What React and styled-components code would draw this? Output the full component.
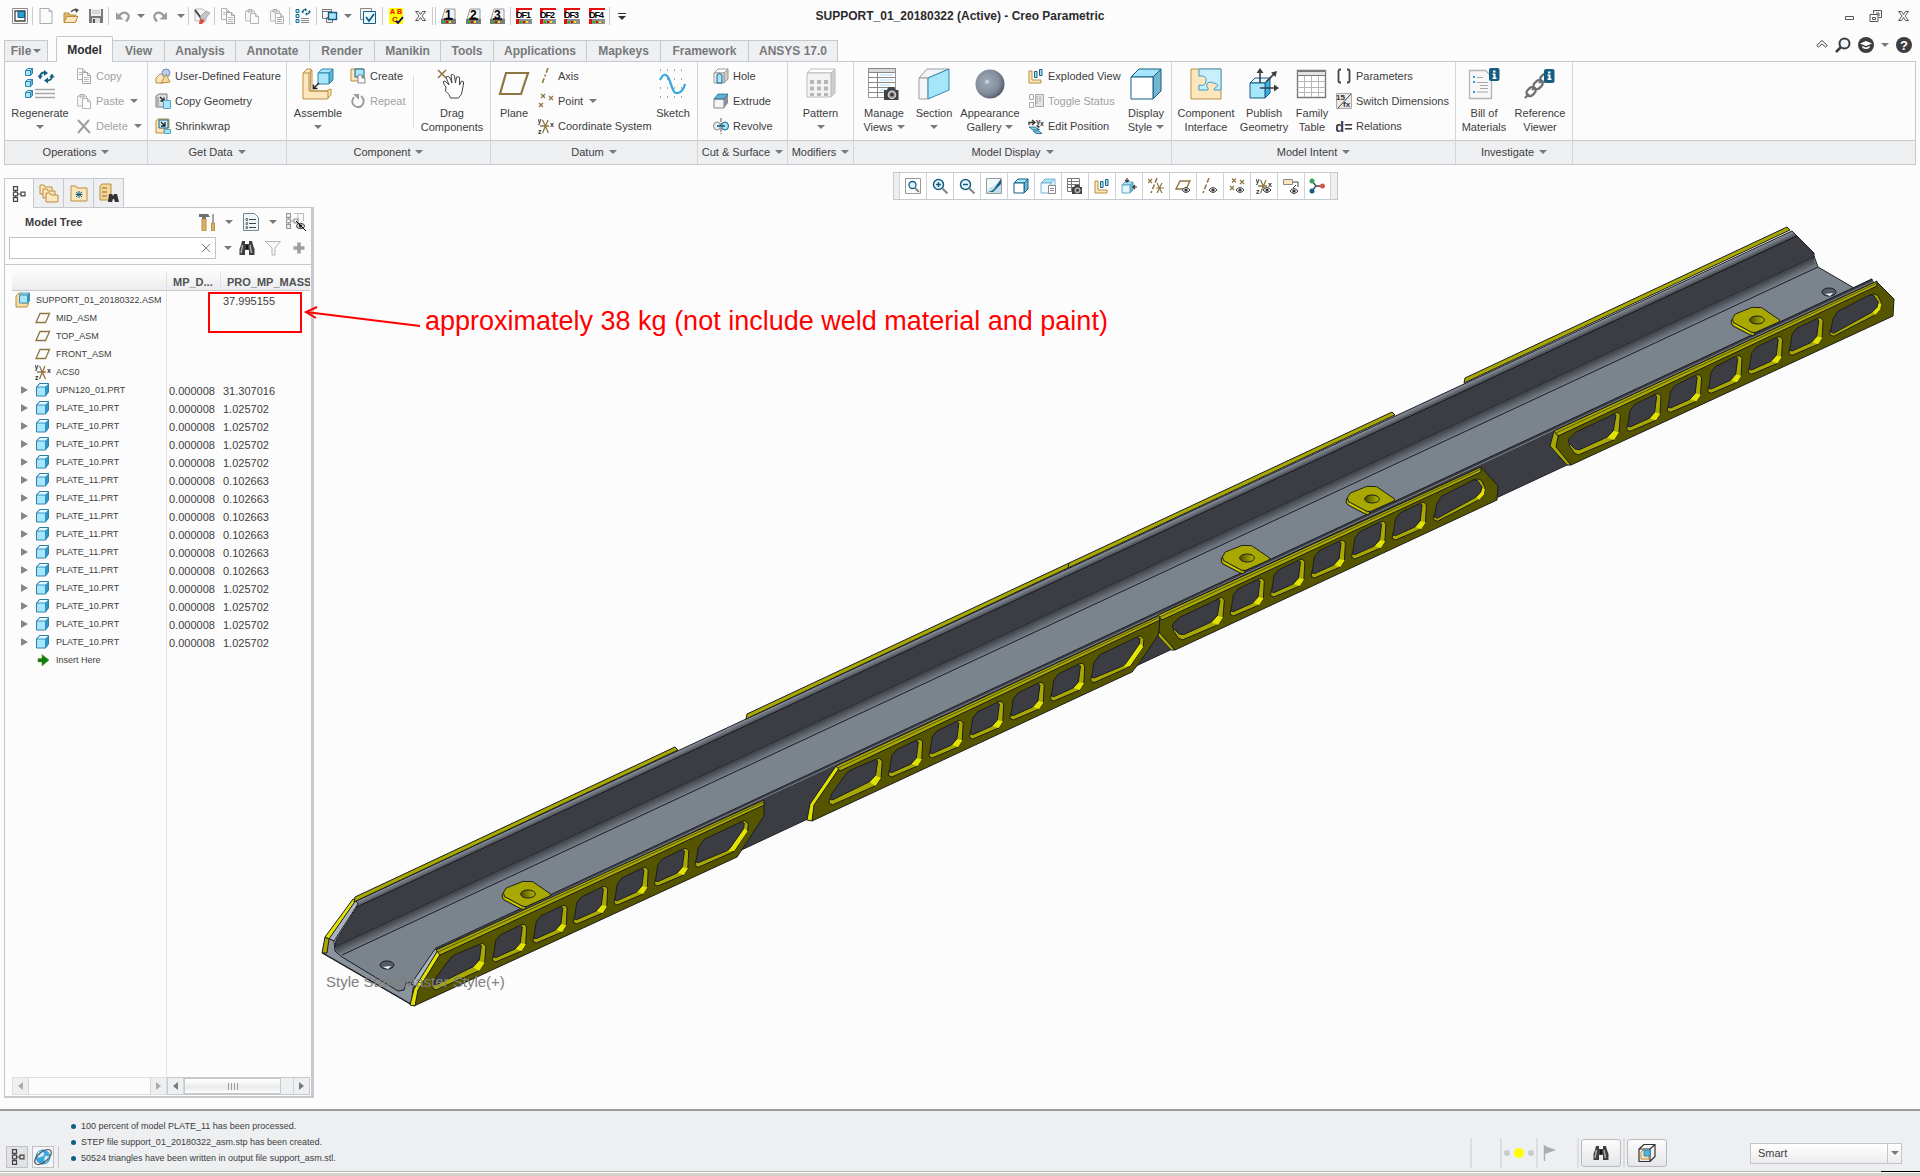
import React from 'react';
import styled, { createGlobalStyle, css } from 'styled-components';

const LINE = '#c5c8cc';
const SOFT = '#eeeff1';
const PAPER = '#fcfcfc';
const INK = '#3c3c3e';
const TEAL = '#135f82';
const CYAN = '#a6e6fb';
const TAN = '#fbe6bd';
const GOLD = '#b98f3f';
const BROWN = '#8f7542';
const MUTE = '#a0a2a4';

const GlobalStyle = createGlobalStyle`
  * { box-sizing: border-box; }
  body { margin: 0; background: ${PAPER}; }
  body, button, input, select {
    font-family: "Liberation Sans", Arial, sans-serif;
    font-size: 11px;
    color: ${INK};
  }
  button { border: 0; padding: 0; background: none; }
  svg { display: block; flex: none; }
`;

/* ---------- icons ---------- */

const Svg = ({ s = 16, children }) => (
  <svg width={s} height={s} viewBox={`0 0 ${s} ${s}`} fill="none" aria-hidden="true">{children}</svg>
);

const Caret = styled.span`
  flex: none;
  width: 0;
  height: 0;
  border: 4px solid transparent;
  border-top: 4px solid #77797b;
  border-bottom: 0;
`;

const Page = ({ x = 1, y = 1, w = 9, h = 11, c = '#a9abad' }) => (
  <path d={`M${x} ${y}h${w - 3}l3 3v${h - 3}h-${w}z M${x + w - 3} ${y}v3h3`} stroke={c} fill="#fafbfc" />
);
const Box3 = ({ x, y, w, d, front = '#fff', top = CYAN, side = '#74b4d0', c = TEAL }) => (
  <g stroke={c} strokeLinejoin="round">
    <path d={`M${x} ${y + d}l${d} -${d}h${w}l-${d} ${d}z`} fill={top} />
    <path d={`M${x + w} ${y + d}l${d} -${d}v${w}l-${d} ${d}z`} fill={side} />
    <path d={`M${x} ${y + d}h${w}v${w}h-${w}z`} fill={front} />
  </g>
);
const Eye = ({ x, y }) => (
  <g>
    <path d={`M${x - 4} ${y}q4 -5 8 0q-4 5 -8 0z`} fill="#eee" stroke="#444" />
    <circle cx={x} cy={y} r="1.6" fill="#333" />
  </g>
);
const Camera = ({ x, y, k = 1 }) => (
  <g transform={`translate(${x} ${y}) scale(${k})`}>
    <path d="M0 2h2l1-2h4l1 2h2v7H0z" fill="#3f4144" />
    <circle cx="5.5" cy="5.3" r="2.6" fill="#999" stroke="#ddd" strokeWidth=".7" />
    <circle cx="5.5" cy="5.3" r="1.2" fill="#333" />
  </g>
);
const Binos = () => (
  <Svg>
    <path d="M3 1h3v3h4V1h3l1 4 1.500 4v6H10v-5H6v5H.5V9L2 5z" fill="#3c3e40" />
    <path d="M3.500 5L2 13M11 5l1.500 8" stroke="#a9abad" strokeWidth="1.500" />
    <path d="M7 5h2v4H7z" fill="#111" />
  </Svg>
);
const Swirl = ({ x, y, k = 1, c = TEAL }) => (
  <g transform={`translate(${x} ${y}) scale(${k})`}>
    <path d="M1 7q0-4 4-4.500M13 6q0 4-4 4.500" stroke={c} strokeWidth="1.8" />
    <path d="M5 0l4 3-4 3z M9 7.500l-4 3 4 3z M-1.500 5.500h5.500l-2.800 4z M10.200 7.500h5.500l-2.800-4z" fill={c} />
  </g>
);
const Cross = ({ x, y, r = 2, c = BROWN }) => (
  <path d={`M${x - r} ${y - r}l${2 * r} ${2 * r}m0 -${2 * r}l-${2 * r} ${2 * r}`} stroke={c} strokeWidth="1.2" />
);
const Tiny = ({ x, y, children, c = '#333', f = 7 }) => (
  <text x={x} y={y} fontSize={f} fontWeight="bold" fill={c} fontFamily="Liberation Sans, sans-serif">{children}</text>
);
const Csys = () => (
  <g>
    <path d="M2 8h9M4.500 2l6 13M10 2L4.500 15" stroke={BROWN} strokeWidth="1.3" />
    <Tiny x={-0.500} y={5} f={7}>y</Tiny><Tiny x={12} y={9} f={7}>x</Tiny><Tiny x={0} y={16} f={7}>z</Tiny>
  </g>
);
const Clip = ({ lines }) => (
  <Svg>
    <path d="M1.500 3h9v10h-9z" stroke="#bbb" fill="#f5f5f5" /><path d="M4 1.500h4v2.500H4z" fill="#ddd" stroke="#aaa" />
    <Page x={6.500} y={5.500} w={8} h={10} c="#b2b4b6" />
    {lines && <path d="M8 9.500h5M8 11.500h5M8 13.500h5" stroke="#aaa" />}
  </Svg>
);
const Exploded = ({ c = GOLD, f = TAN, b = CYAN, s = TEAL }) => (
  <g><path d="M1 3h3v9h9v3H1z" fill={f} stroke={c} /><path d="M6.500 3.500h2.500v6H6.500zM11.500 1.500h2.500v6h-2.500z" fill={b} stroke={s} /></g>
);
const TreeGlyph = ({ c = '#444' }) => (
  <g stroke={c} strokeWidth="1.2"><path d="M3.500 .7h4v3.600h-4zM3.500 6.200h4v3.600h-4zM3.500 11.700h4v3.600h-4zM11 6.200h4v3.600h-4zM5.500 4.300v2M5.500 9.800v2M7.500 8H11" /></g>
);
const Arrow = ({ flip }) => (
  <Svg><path transform={flip ? 'matrix(-1 0 0 1 16 0)' : undefined} d="M3.500 8.500Q8 3 12 5.500T11 13.500" stroke="#9a9c9e" strokeWidth="2.200" /><path transform={flip ? 'matrix(-1 0 0 1 16 0)' : undefined} d="M1 4v7.500h7.500z" fill="#9a9c9e" /></Svg>
);
const MacroIcon = ({ n }) => (
  <Svg>
    <path d="M4 1h10v10H1z" fill="#f2f2f2" stroke="#999" /><path d="M0 11h15v5H0z" fill="#77797b" />
    <path d="M2 13h2v2H2z" fill="#0c0" /><path d="M5 13h2v2H5z" fill="#e00" /><path d="M8 13h2v2H8z" fill="#ee0" />
    <Tiny x={4} y={11} f={12} c="#000">{n}</Tiny>
    <path d="M3 11h9" stroke="#000" strokeWidth="1.500" />
  </Svg>
);
const PdfIcon = ({ n }) => (
  <Svg>
    <path d="M0 0h16v16H0z" fill="#e60f0f" /><path d="M3 2h13v9H0z" fill="#fff" /><path d="M3 11h13v5H3z" fill="#8c8e90" />
    <path d="M4 13h2v2H4z" fill="#0c0" /><path d="M7 13h2v2H7z" fill="#e00" /><path d="M10 13h2v2h-2z" fill="#ee0" />
    <text x="0" y="10" fontSize="9" fontWeight="bold" fill="#000" fontFamily="Liberation Sans, sans-serif" letterSpacing="-1">DF{n}</text>
  </Svg>
);

const I = {
  app: <Svg><path d="M.5 .5h15v15H.5z" stroke="#8a8c8e" fill="#fff" /><path d="M3 3h10v10H3z" fill="#fff" stroke="#444" strokeWidth="1.300" /><path d="M6 3.500h6.500v6H6z" fill="#2d9fd6" stroke={TEAL} /></Svg>,
  fresh: <Svg><Page x={2} y={.5} w={12} h={15} /></Svg>,
  open: <Svg><path d="M1 14V5h5l1 2h6v7z" fill="#e0b970" stroke={GOLD} /><path d="M1 14.500l3-6h11l-3 6z" fill={TAN} stroke={GOLD} /><path d="M8 4q2-3 5-2" stroke="#444" strokeWidth="1.300" /><path d="M12 0l4 2-3 3z" fill="#444" /></Svg>,
  save: <Svg><path d="M1 1h14v14H1z" fill="#77797c" /><path d="M3 1h10v7H3z" fill="#eee" /><path d="M4 3h8M4 5h8" stroke="#bbb" /><path d="M4 10h8v5H4z" fill="#ddd" /><path d="M5 11h2v4H5z" fill="#555" /></Svg>,
  undo: <Arrow />,
  redo: <Arrow flip />,
  erase: <Svg><path d="M1 1h8l3 3v9H1z" fill="#f6f6f6" stroke="#bbb" /><path d="M1 2l6 8" stroke="#444" strokeWidth="2" /><path d="M6 9l6-6 4 2-6 7z" fill="#c4c6c8" stroke="#8d8f92" strokeWidth=".7" /><path d="M6 10l5 3-3 3H5z" fill="#d9534a" /></Svg>,
  copy: <Svg><Page x={1.500} y={.5} w={8} h={11} c="#b2b4b6" /><Page x={6.500} y={4.500} w={8} h={11} c="#a2a4a6" /><path d="M8 9.500h5M8 11.500h5M8 13.500h5M3 4.500h3M3 6.500h3" stroke="#bbb" /></Svg>,
  paste: <Clip />,
  paste2: <Clip lines />,
  del: <Svg><path d="M2 2l12 13M13 2L2 15" stroke="#9c9ea0" strokeWidth="2" /></Svg>,
  regenS: <Svg><path d="M1 1.500h3v3H1zM1 6.500h3v3H1zM1 11.500h3v3H1z" fill={CYAN} stroke={TEAL} strokeWidth=".9" /><Swirl x={7} y={0} k={.58} /><path d="M6 10.500h8M6 12.500h8M6 14.500h8" stroke="#888" /></Svg>,
  windows: <Svg><path d="M.5 1.500h9v9h-9zM4.500 9.500h6v5h-6z" fill="#f5f5f5" stroke="#777" /><path d="M.5 3.500h9" stroke="#777" /><path d="M6.500 4.500h8v7h-8z" fill={CYAN} stroke={TEAL} strokeWidth="1.400" /></Svg>,
  check: <Svg><path d="M.5 .5h11v11H.5z" stroke="#888" fill="#f4f4f4" /><path d="M3.500 3.500h12v12h-12z" fill="#e9f7fd" stroke={TEAL} /><path d="M6 9l3 4 5-7" stroke={TEAL} strokeWidth="1.800" /></Svg>,
  abc: <Svg><path d="M1 0h14v16H1z" fill="#ff0" /><Tiny x={2} y={6} c="#e00">A</Tiny><Tiny x={9} y={6} c="#e00">B</Tiny><Tiny x={4} y={14} f={8} c="#e00">C</Tiny><path d="M8 13l2 2 5-6" stroke="#00006e" strokeWidth="1.800" /></Svg>,
  xx: <Svg><path d="M3.500 3.500h3l2 3 2-3h3l-3.500 4.500 3.500 4.500h-3l-2-3-2 3h-3L7 8z" stroke="#555" fill="#fff" /></Svg>,
  udf: <Svg><path d="M1 10l4-4h6v7l-3 2H1z" fill={TAN} stroke={GOLD} /><circle cx="11" cy="5" r="4" fill="#b9cdf0" stroke="#6d8ac4" /><path d="M6 15l5-9 4 8z" fill="#f5d9a0" stroke={GOLD} /></Svg>,
  copyGeo: <Svg><path d="M1 3l3-2h8v7H9v6H1z" fill="#dcdee0" stroke="#777" /><path d="M4 4v10H1V4z" fill="#aeb1b4" /><path d="M5 4l4 4M9 4.500V8H5.500" stroke="#222" strokeWidth="1.300" /><path d="M8.500 7.500h7v8h-7z" fill={CYAN} stroke="#4fa5c9" /></Svg>,
  shrink: <Svg><path d="M1 3l2-2h11v9H9v5H1z" fill={TAN} stroke={GOLD} /><path d="M4 2h9v8H4z" fill="#cfefff" stroke={TEAL} /><path d="M6 4l4 4M10 4v4H6" stroke="#222" strokeWidth="1.300" /><path d="M9.500 11.500h6v4h-6z" fill={CYAN} stroke="#4fa5c9" /></Svg>,
  create: <Svg><path d="M1 1h12v12H1z" fill={TAN} stroke={GOLD} /><path d="M5 1h9v8H5z" fill={CYAN} stroke={TEAL} /><Page x={8} y={7} w={7} h={8} c="#888" /></Svg>,
  repeat: <Svg><path d="M4 4q-4 6 1 9t8-2q2-5-2-8" stroke="#9c9ea0" strokeWidth="2" /><path d="M3 1h6v6z" fill="#9c9ea0" /></Svg>,
  axis: <Svg><path d="M10 0L4 16" stroke={BROWN} strokeWidth="1.600" strokeDasharray="5 2 2 2" /></Svg>,
  point: <Svg><Cross x={5} y={3} /><Cross x={13} y={5} /><Cross x={3} y={12} /></Svg>,
  csys: <Svg><Csys /></Svg>,
  hole: <Svg><Box3 x={1} y={1} w={10} d={4} front="#eee" top="#fff" side="#ccc" c="#999" /><path d="M4 15V7q2-3 5 0v8z" fill={CYAN} stroke={TEAL} /></Svg>,
  extrude: <Svg><path d="M1 6l4-5h10l-4 5z" fill="#5fb3da" /><path d="M11 6l4-5v9l-4 5z" fill="#8a9097" /><path d="M1 6h10v9H1z" fill="#f4f4f4" stroke="#888" /><path d="M1 6l4-5h10l-4 5z" stroke={TEAL} strokeWidth=".7" /></Svg>,
  revolve: <Svg><ellipse cx="4" cy="8" rx="3.500" ry="4" fill="#e9eef2" stroke="#888" /><ellipse cx="12" cy="8" rx="3.500" ry="4" fill={CYAN} stroke={TEAL} /><path d="M4 8h8" stroke="#2b7fa5" strokeWidth="2" /><path d="M8 0v16" stroke="#555" strokeDasharray="4 1" /></Svg>,
  exploded: <Svg><Exploded /></Svg>,
  toggle: <Svg><path d="M1.500 1.500h4v5h-4zM1.500 9.500h4v5h-4z" stroke="#aaa" /><path d="M7.500 1.500h8v12h-8z" fill="#e4e4e4" stroke="#aaa" /><path d="M9 3v8M12 3v6" stroke="#aaa" /></Svg>,
  editPos: <Svg><path d="M1 7V4.500h5M4 2l3 2.500L4 7" stroke="#333" strokeWidth="1.300" /><Tiny x={8} y={6} f={8}>y</Tiny><Tiny x={12} y={8} f={7}>x</Tiny><Tiny x={8} y={12} f={8}>z</Tiny><path d="M1 9h6l4 3H5zM5 13h6l3 2.500H8z" fill="#7fd0ef" stroke={TEAL} strokeWidth=".8" /></Svg>,
  params: <Svg><path d="M5 1.500H4q-1.500 0-1.500 2v9q0 2 1.500 2h1M11 1.500h1q1.500 0 1.500 2v9q0 2-1.500 2h-1" stroke="#444" strokeWidth="1.800" /></Svg>,
  switchDim: <Svg><path d="M.5 .5h15v15H.5z" fill="#e9e9e9" stroke="#aaa" /><path d="M15 1L2 15" stroke="#444" /><Tiny x={0} y={7} f={8}>15</Tiny><Tiny x={7} y={14} f={8}>fx</Tiny></Svg>,
  relations: <Svg><text x="-1" y="14" fontSize="15" fontWeight="bold" fill="#3d3d3f" fontFamily="Liberation Sans, sans-serif">d=</text></Svg>,
  // 32px ribbon icons
  regen: <Svg s={32}>{[0, 11, 22].map((y) => <Box3 key={y} x={1.500} y={y + .5} w={5} d={2} front={CYAN} c="#2f86ab" />)}<Swirl x={15} y={2} /><path d="M11 21.500h20M11 25.500h20M11 29.500h20" stroke="#a4a6a8" strokeWidth="1.500" /></Svg>,
  assemble: <Svg s={32}><path d="M1 5l4-4 4 0-1 22h16l5-2v6l-4 4H1z" fill={TAN} stroke={GOLD} /><path d="M1 5h6v18h19v8M7 5l3-3v20" stroke={GOLD} /><Box3 x={16} y={1} w={11} d={4} front={CYAN} side="#5bb1d8" c="#2f86ab" /><path d="M17 15l-5 5M11.500 16.500v4h4" stroke="#222" strokeWidth="1.400" /></Svg>,
  drag: <Svg s={32}><path d="M2 2l8 8M10 2L2 10" stroke={BROWN} strokeWidth="1.600" /><path d="M10 19q-4-5-2-6 2 0 5 4L10 9q2-2 4 1l2 5-1-8q2-2 3.500 1l1 7 1-6q3-1 3 1v7l2-4q3 0 2 3l-2 10-3 4h-8q-1-4-5-7z" fill="#fff" stroke="#444" /></Svg>,
  plane: <Svg s={32}><path d="M8 5h22l-7 21H2z" stroke={BROWN} strokeWidth="2.200" /></Svg>,
  sketch: <Svg s={32}><path d="M3 2h26M3 11h26M3 20h26M3 29h26" stroke="#555" strokeDasharray="1 6" /><path d="M3 12q5-10 9-1c4 10 4 15 9 14q5-1 7-9" stroke="#39a7dc" strokeWidth="2.200" /></Svg>,
  pattern: <Svg s={32}><Box3 x={2} y={1} w={24} d={4} front="#f3f3f3" top="#fff" side="#cfcfcf" c="#b9bbbd" /><path d="M5 12h4v4H5zM12 12h4v4h-4zM19 12h4v4h-4zM5 18.500h4v4H5zM12 18.500h4v4h-4zM19 18.500h4v4h-4zM5 25h4v3H5zM12 25h4v3h-4zM19 25h4v3h-4z" fill="#b5b7b9" /></Svg>,
  manage: <Svg s={32}><path d="M.5 .5h27v29H.5z" fill="#fff" stroke="#999" /><path d="M.5 .5h27v4H.5z" fill="#d7d9db" stroke="#888" /><path d="M.5 9.500h27M.5 14.500h27M.5 19.500h27M.5 24.500h27M9.500 4v25" stroke="#888" /><path d="M12 7h13M12 12h13M12 17h10M12 22h6" stroke="#d5eefa" strokeWidth="2" /><Camera x={16} y={19} k={1.450} /></Svg>,
  section: <Svg s={32}><path d="M1 10L9 1h22L10 10z" fill="#f4f5f6" stroke="#9a9c9e" /><path d="M1 10h9v21H1z" fill="#f4f5f6" stroke="#9a9c9e" /><path d="M10 10L31 1v21L10 31z" fill={CYAN} stroke="#2f86ab" /></Svg>,
  sphere: <Svg s={32}><defs><radialGradient id="ball" cx=".4" cy=".42" r=".6"><stop offset="0" stopColor="#e8edf3" /><stop offset=".15" stopColor="#9aa5b3" /><stop offset=".7" stopColor="#828d9b" /><stop offset="1" stopColor="#59606d" /></radialGradient></defs><circle cx="16" cy="16" r="14.500" fill="url(#ball)" /></Svg>,
  display: <Svg s={32}><Box3 x={1} y={1} w={22} d={8} /></Svg>,
  compInt: <Svg s={32}><path d="M1 1h30v30H1z" fill={TAN} stroke={GOLD} /><path d="M9 1h22v21h-7q0-2 3-3.500T24 15t-7 1 1 4v2H9v-5q6 2 7-4T9 8z" fill="#c9effc" stroke="#3f9cc4" /></Svg>,
  publish: <Svg s={32}><Box3 x={2} y={10} w={15} d={5} front={CYAN} side="#3db0e4" top="#e7f6fc" /><path d="M12 15V3M12 20h15M18 14l9-9" stroke="#3d3d3f" strokeWidth="1.600" /><path d="M12 0l3.500 5h-7zM31 20l-5 3.500v-7zM29 3l-1.500 6-4.500-4.500z" fill="#3d3d3f" /></Svg>,
  family: <Svg s={32}><path d="M1.500 2.500h28v27h-28z" fill="#fff" stroke="#77797b" strokeWidth="1.400" /><path d="M1.500 3.500h28v4h-28z" fill="#e1e2e3" stroke="#77797b" /><path d="M1.500 13.500h28M1.500 19.500h28M1.500 24.500h28M8.500 8v21M15.500 8v21M22.500 8v21" stroke="#b5b7b9" /></Svg>,
  bom: <Svg s={32}><path d="M1.500 2.500h16l6 6v22h-22z" fill="#f7f7f8" stroke="#b2b4b6" strokeWidth="1.300" /><path d="M5 8h2v2H5zM5 13h2v2H5zM5 23h2v2H5z" fill="#2d9fd6" /><path d="M9 9.500h6M9 14.500h11M12 17.500h8M12 20.500h8M9 24h11" stroke="#a4a6a8" /><rect x="21" y="0" width="10.500" height="13" rx="2" fill={TEAL} /><path d="M25 2.500h2.500v2H25zM24.500 5.500h3v4h1v1.500h-4V9.500h1V7h-1z" fill="#fff" /></Svg>,
  refView: <Svg s={32}><g stroke="#6d6f72" strokeWidth="2.300"><rect x="-4" y="-3" width="10" height="7" rx="3.500" transform="translate(6 24) rotate(-45)" /><rect x="-4" y="-3" width="10" height="7" rx="3.500" transform="translate(13 17) rotate(-45)" /><rect x="-4" y="-3" width="9" height="6" rx="3" transform="translate(20 10) rotate(-45)" /><path d="M1 30l4-4M8 22l3-3M15 15l3-3" /></g><rect x="20" y="1" width="10.500" height="14" rx="2" fill={TEAL} /><path d="M24 3.500h2.500v2H24zM23.500 6.500h3v4h1V12h-4v-1.500h1V8h-1z" fill="#fff" /></Svg>,
  // graphics toolbar
  zoomFit: <Svg><path d="M.5 .5h15v15H.5z" stroke="#999" /><circle cx="7.500" cy="7" r="3.500" fill="#dff3fc" stroke={TEAL} strokeWidth="1.300" /><path d="M10 10l4 4" stroke="#888" strokeWidth="2" /></Svg>,
  zoomIn: <Svg><circle cx="6.500" cy="6.500" r="5" fill="#e8f6fc" stroke={TEAL} strokeWidth="1.500" /><path d="M4 6.500h5M6.500 4v5" stroke={TEAL} strokeWidth="1.500" /><path d="M10.500 10.500l5 5" stroke="#888" strokeWidth="2.200" /></Svg>,
  zoomOut: <Svg><circle cx="6.500" cy="6.500" r="5" fill="#e8f6fc" stroke={TEAL} strokeWidth="1.500" /><path d="M4 6.500h5" stroke={TEAL} strokeWidth="1.500" /><path d="M10.500 10.500l5 5" stroke="#888" strokeWidth="2.200" /></Svg>,
  repaint: <Svg><path d="M.5 .5h15v15H.5z" fill="#c3dfea" stroke="#999" /><path d="M1 1h14L9 7q-1 2-4 2-3 1-3 5H1z" fill="#eef7fb" /><path d="M15 1v5l-8 8H2q6-1 8-6z" fill={TEAL} /></Svg>,
  dispS: <Svg><Box3 x={1} y={1} w={10} d={4} /></Svg>,
  saved: <Svg><Box3 x={1} y={1} w={10} d={4} front="#f2fafd" side="#e7f6fc" c="#79b3cb" /><path d="M8.500 7.500h7v8h-7z" fill="#fff" stroke="#888" /><path d="M10 10.500h4M10 12.500h4" stroke="#888" /></Svg>,
  cam: <Svg><path d="M.5 .5h12v13H.5z" fill="#fff" stroke="#777" /><path d="M.5 3.500h12M.5 6.500h12M.5 9.500h12M4.500 0v13" stroke="#777" /><Camera x={5} y={7} /></Svg>,
  arrowsBox: <Svg><Box3 x={1} y={4} w={8} d={3} front="#e7f6fc" c="#5fa7c4" /><path d="M6 0v4M4 2l2 2 2-2M16 9h-4M14 7l-2 2 2 2" stroke="#333" strokeWidth="1.200" /></Svg>,
  datum: <Svg><Cross x={2} y={3} /><path d="M9 0L3 15" stroke={BROWN} strokeWidth="1.500" strokeDasharray="5 2" /><path d="M8 10h8M9 5l5 10M14 5L9 15" stroke={BROWN} strokeWidth="1.200" /></Svg>,
  planeEye: <Svg><path d="M5 3h10l-4 8H1z" stroke={BROWN} strokeWidth="1.400" /><Eye x={11} y={12} /></Svg>,
  axisEye: <Svg><path d="M7 0L1 15" stroke={BROWN} strokeWidth="1.500" strokeDasharray="5 2" /><Eye x={11} y={12} /></Svg>,
  pointEye: <Svg><Cross x={5} y={2.500} /><Cross x={13} y={4} /><Cross x={3} y={10} /><Eye x={11} y={12} /></Svg>,
  csysEye: <Svg><Csys /><Eye x={11} y={12} /></Svg>,
  noteEye: <Svg><path d="M.5 1.500h9v5h-9z" fill={TAN} stroke="#888" /><path d="M10 4h5v5M13 7l-3 3" stroke="#444" /><Eye x={11} y={13} /></Svg>,
  spin: <Svg><path d="M3 3l4 5-4 5M7 8h6" stroke="#444" strokeWidth="1.300" /><circle cx="3" cy="3" r="2.500" fill="#3fa35b" /><circle cx="3" cy="13" r="2.500" fill={TEAL} /><circle cx="13.500" cy="8" r="2.500" fill="#d9534a" /></Svg>,
  // navigator
  tree: <Svg><TreeGlyph /></Svg>,
  folders: <Svg s={20}><g fill={TAN} stroke={GOLD}><path d="M1 2h4l1 2h7v7H1z" /><path d="M4 6h4l1 2h7v7H4z" /><path d="M7 10h4l1 2h7v7H7z" /></g></Svg>,
  favs: <Svg s={20}><path d="M2 3h5l1 2h10v13H2z" fill={TAN} stroke={GOLD} /><path d="M10 8v7M7 9l6 5M13 9l-6 5M6.500 11.500h7" stroke={TEAL} /></Svg>,
  cabinet: <Svg s={20}><path d="M1 3l2-2h9v14l-2 2H1z" fill="#f1d79d" stroke={GOLD} /><path d="M3 5h5M3 9h5M3 13h5" stroke={GOLD} strokeWidth="1.500" /><path d="M10 11h3l1 2 1-2h3l2 8h-4l-1-3h-1l-1 3H9z" fill="#333" /></Svg>,
  tools: <Svg s={18}><path d="M1 1h9l2 3H8v2H4V4H1z" fill="#6d7074" /><path d="M4 6h4v12H4z" fill="#d9b26a" stroke={GOLD} /><path d="M15 1v9" stroke="#888" strokeWidth="1.500" /><path d="M13.500 10h3v8h-3z" fill="#d9b26a" stroke={GOLD} /></Svg>,
  list: <Svg s={18}><path d="M1.500 .5h11l4 4v13h-15z" fill="#eef6f9" stroke="#77868f" /><path d="M7 6.500h7M7 10.500h7M7 14.500h7" stroke="#444" /><path d="M4 5.500h1.500v2H4zM4 9.500h1.500v2H4zM4 13.500h1.500v2H4z" stroke="#444" strokeWidth=".7" /></Svg>,
  treeEye: <Svg s={20}><path d="M8 1.500h10M12 1v14M17.500 1v8" stroke="#bbb" /><g transform="translate(-3 1)"><TreeGlyph c="#999" /></g><ellipse cx="14.500" cy="14" rx="4" ry="2.600" fill="#eee" stroke="#333" /><circle cx="14.500" cy="14" r="1.800" fill="#333" /><path d="M10 9l10 10" stroke="#000" /></Svg>,
  binos: <Binos />,
  funnel: <Svg><path d="M.5 1.500h15L10 8v7H7V8z" fill="#f7f7f7" stroke="#b2b4b6" /></Svg>,
  plus: <Svg><path d="M8 2.500v11M2.500 8h11" stroke="#9c9ea0" strokeWidth="3.500" /></Svg>,
  asm: <Svg><path d="M1 4l3-3h3v10h7l-2 4H1z" fill="#f7dda6" stroke={GOLD} /><Box3 x={4.500} y={1} w={8} d={2} front={CYAN} top="#e7f8fe" side="#2f94c8" c="#3f93b8" /></Svg>,
  part: <Svg><path d="M1.500 5l3-3.500h9v8.500l-3 4h-9z" fill="#2f94c8" stroke="#2b7ea6" strokeLinejoin="round" /><path d="M2 5.500h8V13.500H2z" fill="#a6e6fb" /><path d="M2.500 4.500L5 2h8l-2.500 2.500z" fill="#e7f8fe" /></Svg>,
  datumPlane: <Svg><path d="M5 3.500h9.500l-4 9H1z" stroke={BROWN} strokeWidth="1.300" /></Svg>,
  insert: <Svg><path d="M3 6.500h4v-4L14 8l-7 6v-4H3z" fill="#0c7d12" stroke="#6a9c2c" strokeWidth=".6" /></Svg>,
  globe: <Svg s={20}><circle cx="10" cy="10" r="7.500" fill="#3ba6dc" /><path d="M5 5q5-2 6 1t-3 4-4 0zM12 9q4-1 5 2l-4 5q-3-2-1-7z" fill="#c6ecfa" /><ellipse cx="10" cy="10" rx="10" ry="5" stroke="#555" strokeWidth="1.200" transform="rotate(-40 10 10)" /></Svg>,
  cubeSel: <Svg s={18}><path d="M1 5l5-4.500h11v12L12 17.500H1zM1 5h11v12.500M12 5l5-4.500" stroke="#333" strokeWidth="1.200" /><path d="M3 8l2-2h2v5h4v4H3z" fill={TAN} stroke={GOLD} /><path d="M6 6h6v6H6z" fill="#53b4e0" stroke="#2f86ab" /></Svg>,
  flag: <Svg><path d="M2.500 0v16" stroke="#aaacae" strokeWidth="1.500" /><path d="M3 1l11 4-11 4z" fill="#aaacae" /></Svg>,
};

/* ---------- title bar ---------- */

const Shell = styled.div`
  display: flex;
  flex-direction: column;
  height: 100vh;
  overflow: hidden;
  background: ${PAPER};
`;
const TitleBar = styled.header`
  display: grid;
  grid-template-columns: 1fr auto 1fr;
  align-items: center;
  height: 32px;
`;
const Title = styled.h1`
  margin: 0;
  font-size: 12px;
  color: #2b2b2d;
`;
const QuickBar = styled.div`
  display: flex;
  align-items: center;
  padding-left: 8px;
`;
const QuickCell = styled.button`
  display: flex;
  justify-content: center;
  align-items: center;
  flex: none;
  width: ${(p) => p.$w}px;
  height: 24px;
`;
const Rule = styled.span`
  flex: none;
  width: 1px;
  height: ${(p) => p.$h || 18}px;
  margin-right: ${(p) => p.$gap || 0}px;
  background: #c9cbcd;
`;
const Cluster = styled.div`
  display: flex;
  justify-content: flex-end;
  align-items: center;
  gap: ${(p) => p.$gap}px;
  padding: 0 ${(p) => p.$right}px ${(p) => p.$bottom || 0}px 0;
  margin-left: auto;
`;
const IconButton = styled.button`
  display: flex;
  align-items: center;
  justify-content: center;
  flex: none;
`;

const quick = [
  ['app', 24, 'Window menu'], 0, ['fresh', 26, 'New'], ['open', 24, 'Open'], ['save', 25, 'Save'], 0,
  ['undo', 27, 'Undo'], ['v', 10, 'Undo list'], ['redo', 28, 'Redo'], ['v', 14, 'Redo list'], 0,
  ['erase', 25, 'Erase'], 0, ['copy', 25, 'Copy'], ['paste', 24, 'Paste'], ['paste2', 25, 'Paste special'], 0,
  ['regenS', 26, 'Regenerate'], 0, ['windows', 25, 'Windows'], ['v', 12, 'Window list'], ['check', 28, 'Activate'], 0,
  ['abc', 25, 'Spelling'], ['xx', 24, 'Close'], 2, 0,
  ['m1', 26, 'Macro 1'], ['m2', 24, 'Macro 2'], ['m3', 24, 'Macro 3'], 0,
  ['p1', 25, 'PDF 1'], ['p2', 24, 'PDF 2'], ['p3', 24, 'PDF 3'], ['p4', 25, 'PDF 4'], 0, ['more', 24, 'Customize'],
];
const quickGlyph = (k) => {
  if (k === 'v') return <Caret />;
  if (k === 'more') return <Svg><path d="M4 5h8v1H4zM4 8h8l-4 4z" fill="#333" /></Svg>;
  if (/^m\d/.test(k)) return <MacroIcon n={k[1]} />;
  if (/^p\d/.test(k)) return <PdfIcon n={k[1]} />;
  return I[k];
};

/* ---------- ribbon ---------- */

const TabBar = styled.nav`
  display: flex;
  align-items: flex-end;
  height: 29px;
  padding-left: 4px;
`;
const Tab = styled.button`
  display: flex;
  justify-content: center;
  align-items: center;
  gap: 2px;
  width: ${(p) => p.$w}px;
  height: 21px;
  border: 1px solid ${LINE};
  border-width: 1px 1px 0 0;
  background: ${SOFT};
  font-size: 12px;
  font-weight: bold;
  color: #77797b;
  ${(p) => p.$file && css`
    border-left-width: 1px;
    margin-right: 8px;
  `}
  ${(p) => p.$active && css`
    position: relative;
    height: 26px;
    margin-bottom: -1px;
    border-width: 1px 1px 0 1px;
    border-radius: 2px 2px 0 0;
    background: ${PAPER};
    color: #2f2f31;
  `}
`;
const Ribbon = styled.section`
  display: flex;
  margin: 0 4px;
  border: 1px solid ${LINE};
`;
const GroupBox = styled.div`
  display: flex;
  flex-direction: column;
  flex: ${(p) => (p.$w ? 'none' : 1)};
  width: ${(p) => (p.$w ? `${p.$w}px` : 'auto')};
  border-right: ${(p) => (p.$w ? 1 : 0)}px solid #d3d5d8;
`;
const GroupBody = styled.div`
  display: flex;
  height: 78px;
`;
const GroupName = styled.button`
  display: flex;
  justify-content: center;
  align-items: center;
  gap: 5px;
  height: 24px;
  padding-bottom: 2px;
  border-top: 1px solid ${LINE};
  background: ${SOFT};
`;
const BigButton = styled.button`
  display: flex;
  flex-direction: column;
  align-items: center;
  flex: none;
  width: ${(p) => p.$w}px;
  padding-top: 6px;
  white-space: nowrap;
`;
const BigLabel = styled.span`
  display: flex;
  flex-direction: column;
  align-items: center;
  margin-top: 6px;
  line-height: 14px;
`;
const LabelLine = styled.span`
  display: flex;
  align-items: center;
  justify-content: center;
  gap: 4px;
  height: 14px;
`;
const Stack = styled.div`
  display: flex;
  flex-direction: column;
  align-items: flex-start;
  flex: ${(p) => (p.$w ? 'none' : 1)};
  width: ${(p) => (p.$w ? `${p.$w}px` : 'auto')};
  padding: 1px 0 0 ${(p) => p.$pad}px;
`;
const SmallButton = styled.button`
  display: flex;
  align-items: center;
  gap: 4px;
  height: 25px;
  white-space: nowrap;
  color: ${(p) => (p.disabled ? MUTE : INK)};
  ${Caret} { margin-left: 2px; }
`;
const Divider = styled.span`
  width: 1px;
  margin: 13px 0;
  background: #dcdee0;
`;

const big = (icon, w, a, b, caret) => ({ t: 'big', icon, w, a, b, caret });
const stack = (pad, w, ...items) => ({ t: 'stack', pad, w, items });

const groups = [
  { name: 'Operations', w: 143, parts: [big('regen', 70, 'Regenerate', '', true), stack(1, 0, ['copy', 'Copy', 1], ['paste', 'Paste', 1, 1], ['del', 'Delete', 1, 1])] },
  { name: 'Get Data', w: 139, parts: [stack(7, 0, ['udf', 'User-Defined Feature'], ['copyGeo', 'Copy Geometry'], ['shrink', 'Shrinkwrap'])] },
  { name: 'Component', w: 204, parts: [big('assemble', 62, 'Assemble', '', true), stack(1, 64, ['create', 'Create'], ['repeat', 'Repeat', 1]), { t: 'rule' }, big('drag', 76, 'Drag', 'Components')] },
  { name: 'Datum', w: 207, parts: [big('plane', 46, 'Plane'), stack(1, 112, ['axis', 'Axis'], ['point', 'Point', 0, 1], ['csys', 'Coordinate System']), big('sketch', 48, 'Sketch')] },
  { name: 'Cut & Surface', w: 90, parts: [stack(15, 0, ['hole', 'Hole'], ['extrude', 'Extrude'], ['revolve', 'Revolve'])] },
  { name: 'Modifiers', w: 66, parts: [big('pattern', 65, 'Pattern', '', true)] },
  { name: 'Model Display', w: 318, parts: [big('manage', 60, 'Manage', 'Views', true), big('section', 40, 'Section', '', true), big('sphere', 72, 'Appearance', 'Gallery', true), stack(2, 95, ['exploded', 'Exploded View'], ['toggle', 'Toggle Status', 1], ['editPos', 'Edit Position']), big('display', 50, 'Display', 'Style', true)] },
  { name: 'Model Intent', w: 284, parts: [big('compInt', 68, 'Component', 'Interface'), big('publish', 48, 'Publish', 'Geometry'), big('family', 48, 'Family', 'Table'), stack(0, 0, ['params', 'Parameters'], ['switchDim', 'Switch Dimensions'], ['relations', 'Relations'])] },
  { name: 'Investigate', w: 117, parts: [big('bom', 56, 'Bill of', 'Materials'), big('refView', 56, 'Reference', 'Viewer')] },
];

const tabs = [['Model', 57], ['View', 52], ['Analysis', 71], ['Annotate', 74], ['Render', 65], ['Manikin', 66], ['Tools', 53], ['Applications', 93], ['Mapkeys', 74], ['Framework', 88], ['ANSYS 17.0', 89]];

function RibbonPart({ part }) {
  if (part.t === 'rule') return <Divider />;
  if (part.t === 'big') {
    return (
      <BigButton $w={part.w}>
        {I[part.icon]}
        <BigLabel>
          <LabelLine>{part.a}</LabelLine>
          {(part.b || part.caret) && <LabelLine>{part.b}{part.caret && <Caret />}</LabelLine>}
        </BigLabel>
      </BigButton>
    );
  }
  return (
    <Stack $pad={part.pad} $w={part.w}>
      {part.items.map(([icon, label, off, caret]) => (
        <SmallButton key={label} disabled={!!off}>{I[icon]}{label}{caret ? <Caret /> : null}</SmallButton>
      ))}
    </Stack>
  );
}

/* ---------- navigator ---------- */

const Main = styled.main`
  position: relative;
  display: flex;
  flex: 1;
  min-height: 0;
`;
const Navigator = styled.aside`
  display: flex;
  flex-direction: column;
  flex: none;
  width: 310px;
  margin: 13px 0 11px 4px;
`;
const NavTabs = styled.div`
  display: flex;
`;
const NavTab = styled.button`
  display: flex;
  justify-content: center;
  align-items: center;
  width: 30px;
  height: 29px;
  border: 1px solid ${LINE};
  border-width: 1px 1px 0 0;
  background: ${(p) => (p.$active ? PAPER : SOFT)};
  ${(p) => p.$active && css`
    position: relative;
    height: 30px;
    margin-bottom: -1px;
    border-left-width: 1px;
    padding-right: 2px;
  `}
`;
const NavBody = styled.div`
  display: flex;
  flex-direction: column;
  flex: 1;
  min-height: 0;
  border: 1px solid ${LINE};
  border-right-width: 3px;
  border-bottom-width: 2px;
`;
const NavHead = styled.div`
  display: flex;
  align-items: center;
  height: 28px;
  padding: 0 5px 0 20px;
`;
const NavTitle = styled.h2`
  flex: 1;
  margin: 0;
  font-size: 11px;
`;
const Tools = styled.div`
  display: flex;
  align-items: center;
  gap: ${(p) => p.$gap}px;
`;
const SearchRow = styled.div`
  display: flex;
  align-items: center;
  justify-content: space-between;
  height: 29px;
  padding: 0 4px 5px 4px;
  border-bottom: 1px solid ${LINE};
`;
const SearchField = styled.div`
  display: flex;
  align-items: center;
  width: 207px;
  height: 22px;
  padding-right: 4px;
  border: 1px solid #c0c3c6;
  background: #fff;
`;
const SearchInput = styled.input`
  flex: 1;
  min-width: 0;
  border: 0;
  outline: 0;
  background: none;
`;
const TreeArea = styled.div`
  display: flex;
  flex-direction: column;
  flex: 1;
  min-height: 0;
  padding: 6px 1px 0 7px;
`;
const TreeTable = styled.table`
  width: 100%;
  table-layout: fixed;
  border-collapse: separate;
  border-spacing: 0;
`;
const Th = styled.th`
  width: ${(p) => p.$w}px;
  height: 20px;
  padding: 2px 0 0 6px;
  border-bottom: 1px solid ${LINE};
  border-right: ${(p) => (p.$last ? 0 : 1)}px solid #dfe1e3;
  background: linear-gradient(#fbfbfb, #ececee);
  text-align: left;
  white-space: nowrap;
  overflow: hidden;
  color: #4f5153;
`;
const NameCell = styled.td`
  height: 18px;
  padding: 0;
  border-right: 1px solid #dfe1e3;
`;
const NodeLine = styled.span`
  display: flex;
  align-items: center;
  height: 18px;
  padding-left: ${(p) => p.$indent}px;
  font-size: 9px;
  white-space: nowrap;
`;
const Expander = styled.button`
  width: 0;
  height: 0;
  margin-right: 7px;
  border: 4px solid transparent;
  border-left: 7px solid #858789;
  border-right: 0;
`;
const NodeText = styled.span`
  margin-left: 5px;
`;
const ValueCell = styled.td`
  padding: 2px 0 0 2px;
  line-height: 16px;
`;
const ColumnRule = styled.div`
  flex: 1;
  width: 155px;
  border-right: 1px solid #dfe1e3;
`;
const ScrollRow = styled.div`
  display: flex;
  height: 18px;
  margin-bottom: 1px;
`;
const ScrollBar = styled.div`
  display: flex;
  flex: ${(p) => (p.$w ? 'none' : 1)};
  width: ${(p) => (p.$w ? `${p.$w}px` : 'auto')};
  border: 1px solid ${(p) => (p.$dim ? '#dddfe1' : LINE)};
  background: ${(p) => (p.$dim ? PAPER : SOFT)};
`;
const ScrollStep = styled.button`
  display: flex;
  align-items: center;
  justify-content: center;
  width: 16px;
  border: 1px solid #d3d5d7;
  border-width: ${(p) => (p.$end ? '0 0 0 1px' : '0 1px 0 0')};
  margin-left: ${(p) => (p.$end ? 'auto' : 0)};
  background: ${SOFT};
`;
const Thumb = styled.div`
  display: flex;
  align-items: center;
  justify-content: center;
  gap: 2px;
  width: 97px;
  border: 1px solid ${LINE};
  background: linear-gradient(#fff, #e9eaeb 60%, #fff);
`;
const Grip = styled.span`
  width: 1px;
  height: 7px;
  background: #999b9d;
`;

const rows = [
  { k: 'asm', name: 'SUPPORT_01_20180322.ASM', v: '37.995155' },
  { k: 'datumPlane', name: 'MID_ASM' },
  { k: 'datumPlane', name: 'TOP_ASM' },
  { k: 'datumPlane', name: 'FRONT_ASM' },
  { k: 'csys', name: 'ACS0' },
  { k: 'part', name: 'UPN120_01.PRT', d: '0.000008', v: '31.307016' },
  ...Array(4).fill({ k: 'part', name: 'PLATE_10.PRT', d: '0.000008', v: '1.025702' }),
  ...Array(6).fill({ k: 'part', name: 'PLATE_11.PRT', d: '0.000008', v: '0.102663' }),
  ...Array(4).fill({ k: 'part', name: 'PLATE_10.PRT', d: '0.000008', v: '1.025702' }),
  { k: 'insert', name: 'Insert Here' },
];

const Tri = ({ right, c = '#77797b' }) => (
  <svg width="5" height="8" viewBox="0 0 5 8"><path d={right ? 'M0 0l5 4-5 4z' : 'M5 0L0 4l5 4z'} fill={c} /></svg>
);

function ModelTree() {
  return (
    <Navigator>
      <NavTabs role="tablist">
        <NavTab $active aria-label="Model tree">{I.tree}</NavTab>
        <NavTab aria-label="Folder browser">{I.folders}</NavTab>
        <NavTab aria-label="Favorites">{I.favs}</NavTab>
        <NavTab aria-label="Search results">{I.cabinet}</NavTab>
      </NavTabs>
      <NavBody>
        <NavHead>
          <NavTitle>Model Tree</NavTitle>
          <Tools $gap={9}>
            <IconButton aria-label="Settings">{I.tools}</IconButton><Caret />
            <IconButton aria-label="Show">{I.list}</IconButton><Caret />
            <IconButton aria-label="Tree visibility">{I.treeEye}</IconButton>
          </Tools>
        </NavHead>
        <SearchRow>
          <SearchField>
            <SearchInput aria-label="Search the tree" />
            <IconButton aria-label="Clear search"><Svg s={10}><path d="M1 1l8 8M9 1L1 9" stroke="#77797b" /></Svg></IconButton>
          </SearchField>
          <Caret />
          <Tools $gap={10}>
            <IconButton aria-label="Find">{I.binos}</IconButton>
            <IconButton aria-label="Filter">{I.funnel}</IconButton>
            <IconButton aria-label="Add column">{I.plus}</IconButton>
          </Tools>
        </SearchRow>
        <TreeArea>
          <TreeTable>
            <thead>
              <tr><Th $w={155} /><Th $w={54}>MP_D...</Th><Th $last>PRO_MP_MASS</Th></tr>
            </thead>
            <tbody>
              {rows.map((r, i) => (
                <tr key={i}>
                  <NameCell>
                    <NodeLine $indent={r.k === 'asm' ? 3 : r.k === 'part' ? 9 : 23}>
                      {r.k === 'part' && <Expander aria-label={`Expand ${r.name}`} />}
                      {I[r.k]}
                      <NodeText>{r.name}</NodeText>
                    </NodeLine>
                  </NameCell>
                  <ValueCell>{r.d}</ValueCell>
                  <ValueCell>{r.v}</ValueCell>
                </tr>
              ))}
            </tbody>
          </TreeTable>
          <ColumnRule />
          <ScrollRow>
            <ScrollBar $w={155} $dim>
              <ScrollStep aria-label="Scroll names left"><Tri c="#aaacae" /></ScrollStep>
              <ScrollStep $end aria-label="Scroll names right"><Tri right c="#aaacae" /></ScrollStep>
            </ScrollBar>
            <ScrollBar>
              <ScrollStep aria-label="Scroll columns left"><Tri /></ScrollStep>
              <Thumb><Grip /><Grip /><Grip /><Grip /></Thumb>
              <ScrollStep $end aria-label="Scroll columns right"><Tri right /></ScrollStep>
            </ScrollBar>
          </ScrollRow>
        </TreeArea>
      </NavBody>
    </Navigator>
  );
}

/* ---------- graphics area ---------- */

const Viewport = styled.section`
  position: relative;
  flex: 1;
  min-width: 0;
  padding: 7px 4px 0 0;
`;
const ModelCanvas = styled.svg`
  position: absolute;
  inset: 0;
  width: 100%;
  height: 100%;
`;
const ViewTools = styled.div`
  position: relative;
  display: flex;
  width: max-content;
  height: 28px;
  margin: 0 auto;
  padding: 0 6px 0 5px;
  border: 1px solid ${LINE};
  background: ${SOFT};
`;
const ViewButton = styled.button`
  display: flex;
  align-items: center;
  justify-content: center;
  width: 27px;
  border-left: 1px solid #cfd1d3;
  background: #fff;
  &:last-child { border-right: 1px solid #cfd1d3; }
`;
const StyleState = styled.span`
  position: absolute;
  left: 12px;
  bottom: 118px;
  font-size: 15px;
  line-height: 18px;
  color: #808080;
`;
const Annotation = styled.div`
  position: absolute;
  left: 208px;
  top: 126px;
  display: flex;
  gap: 4px;
  color: #f00;
  font-size: 27px;
  line-height: 60px;
  white-space: nowrap;
  pointer-events: none;
`;

const Y = '#a8a800', YB = '#e2e200', OL = '#555500', DK = '#3b3d42', GR = '#7b838d', LT = '#a9b4c0', ST = '#1c1d22';

/* Gradient vector square to a long edge that falls by `fall` per unit of x. */
const across = (x, y, fall, depth) => {
  const t = depth / (1 + fall * fall);
  return { x1: x, y1: y, x2: x + fall * t, y2: y + t };
};

const windowShapes = {
  mid: {
    outer: 'M85 2L96 0L103 8L100 62L88 80L10 113L0 108L3 92z',
    glow: 'M84 56L101 60L88 80L70 74z',
    hole: 'M3 98L10 50L24 32L84 3L90 8L84 56L68 74L10 100z',
  },
  slantStart: {
    outer: 'M140 4L150 0L160 8L156 60L140 82L10 140L0 134L2 118z',
    glow: 'M139 52L156 58L140 82L122 72z',
    hole: 'M5 124L8 106L55 42L72 32L138 4L146 8L140 50L122 70L12 124z',
  },
  slantEnd: {
    outer: 'M138 4L150 0L160 10L158 32L120 90L105 98L10 140L0 134L3 118z',
    glow: 'M148 22L158 32L118 90L100 92z',
    hole: 'M3 124L10 80L28 56L138 4L148 8L146 24L104 84L94 91L10 126z',
  },
  bluntStart: {
    outer: 'M138 4L148 0L156 8L152 60L138 82L30 128L18 122L2 98z',
    glow: 'M135 55L152 60L138 82L118 76z',
    hole: 'M0 90L3 78L22 60L138 5L143 9L135 55L117 74L34 112L20 110z',
  },
  bluntEnd: {
    outer: 'M118 4L132 0L144 4L155 25L152 46L138 62L12 127L0 121L3 106z',
    glow: 'M148 28L155 30L152 46L138 62L128 54z',
    hole: 'M3 114L10 75L25 52L120 3L132 4L146 24L142 40L128 54L12 118z',
  },
};
const plates = [
  { x: 310, y: 780, face: '438,950 764,802 764,816 745,845 737,857 414,1006 416,990', side: '438,950 441,953 418,990 415,1006 410,1005 414,989', slant: true, first: [368, 490], mid: [547, 433], last: [1155, 122] },
  { x: 780, y: 580, face: '836,766 1160,616 1159,634 1140,662 1132,672 812,821 813,806', side: '836,766 840,767 814,805 812,821 807,820 810,804', slant: true, first: [147, 535], mid: [325, 478], last: [932, 168] },
  { x: 1120, y: 440, face: '1160,614 1481,467 1498,486 1497,500 1175,650 1159,632', side: '1159,632 1175,650 1171,650 1158,636', first: [157, 472], mid: [330, 415], last: [940, 117] },
  { x: 1400, y: 210, face: '1556,430 1877,282 1894,299 1893,316 1571,465 1554,446', side: '1554,431 1559,432 1556,447 1571,465 1567,465 1550,446', first: [505, 607], mid: [680, 551], last: [1289, 252] },
];
const topEdges = [[436, 950, 764, 800], [836, 766, 1160, 615], [1158, 615, 1481, 467], [1554, 431, 1877, 281]];
const backRails = [[355, 897, 675, 747], [747, 714, 1069, 563], [1069, 563, 1392, 412], [1465, 378, 1787, 227]];
const pads = [[528, 894], [1247, 558], [1372, 499], [1757, 320]];

function Opening({ kind, at }) {
  const w = windowShapes[kind];
  return (
    <g transform={`translate(${at[0]} ${at[1]})`} strokeWidth="3" strokeLinejoin="round">
      <path d={w.outer} fill={Y} stroke={ST} />
      <path d={w.glow} fill={YB} />
      <path d={w.hole} fill={DK} stroke={ST} />
    </g>
  );
}

function SupportModel() {
  return (
    <ModelCanvas viewBox="314 165 1606 944" preserveAspectRatio="xMidYMid meet" role="img" aria-label="Steel support channel with welded plates">
      <defs>
        <linearGradient id="fillet" gradientUnits="userSpaceOnUse" {...across(1121, 580, 0.4664, 12)}><stop offset="0" stopColor={DK} /><stop offset="1" stopColor={GR} /></linearGradient>
        <linearGradient id="lip" gradientUnits="userSpaceOnUse" {...across(1074, 566, 0.4666, 8)}><stop offset="0" stopColor="#8a939e" /><stop offset=".4" stopColor="#6d747e" /><stop offset="1" stopColor={DK} /></linearGradient>
        <linearGradient id="bore"><stop offset="0" stopColor="#4c4c00" /><stop offset="1" stopColor="#b8b800" /></linearGradient>
      </defs>
      {/* channel floor and walls */}
      <polygon points="322,953 410,1004 1872,316 1872,279 1854,288 1818,267 1814,256 334,947" fill={GR} stroke={ST} />
      <polygon points="356,901 1792,231 1797,236 357,908" fill="url(#lip)" stroke={ST} />
      <polygon points="357,907 1797,236 1814,253 1814,257 335,947 336,940" fill={DK} stroke={ST} />
      <polygon points="335,947 1814,257 1814,261 1818,267 342,955 336,951" fill="url(#fillet)" />
      <path d="M342 955L1818 267" stroke={ST} />
      <polygon points="435,949 1872,279 1893,313 411,1004" fill={DK} />
      <path d="M411 1004L1893 313" stroke={ST} />
      <path d="M435 948.500L1872 279" stroke={ST} />
      <path d="M437 950L1874 281" stroke={LT} strokeWidth=".6" />
      {/* near end section */}
      <polygon points="323,953 327,937 334,941 335,951 342,957 398,991 404,990 406,983 414,982 411,1004" fill="#8b939d" stroke={ST} strokeLinejoin="round" />
      <polygon points="355,899 358,904 334,941 328,938" fill={LT} stroke={ST} />
      <polygon points="353,899 356,900 329,939 325,937" fill={YB} stroke={ST} />
      <polygon points="325,937 329,939 327,953 322,953" fill={Y} stroke={ST} />
      <polygon points="435,949 440,950 417,987 411,984" fill={LT} stroke={ST} />
      <path d="M411 984l5 4-5 16" stroke={ST} fill="none" />
      {/* back rails */}
      {backRails.map(([a, b, c, d]) => (
        <polygon key={a} points={`${a},${b} ${c},${d} ${c + 3},${d + 3} ${a - 1},${b + 5}`} fill={Y} stroke={ST} />
      ))}
      {/* holes in the web */}
      {[[387, 965], [1829, 292]].map(([x, y]) => (
        <g key={x}><ellipse cx={x} cy={y} rx="7" ry="4" fill="#565c65" stroke={ST} /><path d={`M${x - 4} ${y + 2}l8 -1l-3 3z`} fill="#fff" /></g>
      ))}
      {/* pads */}
      {pads.map(([x, y]) => (
        <g key={x} transform={`translate(${x} ${y}) scale(.3333)`} strokeWidth="3" strokeLinejoin="round">
          <path d="M-77 0L-70 -6L-18 34L-5 34L-10 48L-22 44L-72 18L-77 12z" fill={Y} stroke={ST} />
          <path d="M-74 -4L-65 -18L-15 -38L14 -37L68 0L66 6L-6 38L-18 36L-70 8z" fill={Y} stroke={ST} />
          <path d="M-68 14L-20 40" stroke={YB} />
          <ellipse rx="22" ry="12" fill="url(#bore)" stroke={ST} />
        </g>
      ))}
      {/* front plates with their openings */}
      {plates.map((p, i) => {
        const [a, b, c, d] = topEdges[i];
        return (
          <g key={i}>
            <polygon points={p.face} fill={OL} stroke={ST} strokeLinejoin="round" />
            <polygon points={p.side} fill={p.slant ? YB : Y} stroke={ST} strokeLinejoin="round" />
            <polygon points={`${a},${b} ${c},${d} ${c},${d + 5} ${a + 4},${b + 5}`} fill={Y} stroke={ST} />
            <path d={`M${a + 2} ${b + 2}L${c} ${d + 2}`} stroke={ST} strokeWidth=".6" />
            <g transform={`translate(${p.x} ${p.y}) scale(.3333)`}>
              <Opening kind={p.slant ? 'slantStart' : 'bluntStart'} at={p.first} />
              {[0, 1, 2, 3, 4].map((n) => <Opening key={n} kind="mid" at={[p.mid[0] + 121.600 * n, p.mid[1] - 57 * n]} />)}
              <Opening kind={p.slant ? 'slantEnd' : 'bluntEnd'} at={p.last} />
            </g>
          </g>
        );
      })}
    </ModelCanvas>
  );
}

const viewTools = [['zoomFit', 'Refit'], ['zoomIn', 'Zoom in'], ['zoomOut', 'Zoom out'], ['repaint', 'Repaint'], ['dispS', 'Display style'], ['saved', 'Saved orientations'], ['cam', 'View manager'], ['exploded', 'Exploded view'], ['arrowsBox', 'Annotation orientation'], ['datum', 'Datum display'], ['planeEye', 'Plane display'], ['axisEye', 'Axis display'], ['pointEye', 'Point display'], ['csysEye', 'Csys display'], ['noteEye', 'Annotation display'], ['spin', 'Spin center']];

/* ---------- status bar ---------- */

const StatusBar = styled.footer`
  flex: none;
  border-top: 2px solid #999a9b;
  background: ${SOFT};
`;
const StatusRow = styled.div`
  display: flex;
  align-items: flex-end;
  height: 60px;
  padding: 0 18px 3px 6px;
`;
const StatusToggle = styled.button`
  display: flex;
  align-items: center;
  justify-content: center;
  width: 22px;
  height: 22px;
  margin-right: 4px;
  border: 1px solid #bfc1c4;
  background: ${(p) => (p.$on ? '#e1e2e4' : '#f5f5f6')};
`;
const Messages = styled.ul`
  margin: 0 0 2px;
  padding: 0 0 0 6px;
  list-style: none;
  font-size: 9px;
  line-height: 16px;
`;
const Message = styled.li`
  display: flex;
  align-items: center;
  gap: 5px;
  &::before {
    content: '';
    width: 5px;
    height: 5px;
    border-radius: 50%;
    background: ${TEAL};
  }
`;
const StatusSlot = styled.div`
  display: flex;
  align-items: center;
  gap: 4px;
  width: ${(p) => p.$w}px;
  height: 30px;
  padding-left: ${(p) => p.$pad || 0}px;
  border-left: 2px solid #dcdde0;
`;
const Dot = styled.span`
  width: ${(p) => p.$s}px;
  height: ${(p) => p.$s}px;
  border-radius: 50%;
  background: ${(p) => p.$c};
`;
const StatusButton = styled.button`
  display: flex;
  align-items: center;
  justify-content: center;
  width: 40px;
  height: 28px;
  border: 1px solid #b7b9bc;
  border-radius: 3px;
  background: linear-gradient(#fbfbfb, #e6e7e9);
`;
const Picker = styled.div`
  position: relative;
  width: 152px;
  height: 21px;
  margin-left: 81px;
`;
const FilterSelect = styled.select`
  appearance: none;
  width: 100%;
  height: 100%;
  padding: 0 20px 0 7px;
  border: 1px solid #c3c5c8;
  border-radius: 0;
  background: linear-gradient(#fff, #ececee);
`;
const PickerArrow = styled.span`
  position: absolute;
  top: 1px;
  right: 1px;
  bottom: 1px;
  width: 14px;
  display: flex;
  align-items: center;
  justify-content: center;
  border-left: 1px solid #c3c5c8;
  pointer-events: none;
`;
const Sill = styled.div`
  display: flex;
  justify-content: flex-end;
  height: 5px;
  border-top: 1px solid #b5b7b9;
  background: linear-gradient(#fff 1px, #d5d1c9 1px);
`;
const SillMark = styled.span`
  width: 39px;
  height: 1px;
  margin-top: -1px;
  background: #000;
`;

export default function App() {
  return (
    <Shell>
      <GlobalStyle />
      <TitleBar>
        <QuickBar>
          {quick.map((q, i) => (Array.isArray(q)
            ? <QuickCell key={i} $w={q[1]} aria-label={q[2]}>{quickGlyph(q[0])}</QuickCell>
            : <Rule key={i} $gap={q} />))}
        </QuickBar>
        <Title>SUPPORT_01_20180322 (Active) - Creo Parametric</Title>
        <Cluster $gap={13} $right={9}>
          <IconButton aria-label="Minimize"><Svg s={12}><path d="M1.500 6.500h8v3h-8z" stroke="#555" /></Svg></IconButton>
          <IconButton aria-label="Restore"><Svg s={13}><path d="M4.500 .5h8v7h-3M4.500 .5v3M1 4.500h8v7H1zM3.500 7.500h3v2h-3zM7 3h3v3" stroke="#555" /></Svg></IconButton>
          <IconButton aria-label="Close">{I.xx}</IconButton>
        </Cluster>
      </TitleBar>
      <TabBar>
        <Tab $file $w={44}>File<Caret /></Tab>
        {tabs.map(([t, w], i) => <Tab key={t} $w={w} $active={i === 0}>{t}</Tab>)}
        <Cluster $gap={7} $right={8} $bottom={8}>
          <IconButton aria-label="Collapse ribbon"><Svg s={12}><path d="M.7 6.500L6 1.500l5.300 5M2.500 8L6 5l3.500 3M.7 6.500l1.800 1.500M11.300 6.500L9.500 8" stroke="#444" /></Svg></IconButton>
          <IconButton aria-label="Command search"><Svg><circle cx="9.500" cy="6.500" r="5" stroke="#3d3d3f" strokeWidth="2" fill="#eef6fb" /><path d="M6 10l-5 5" stroke="#3d3d3f" strokeWidth="2.500" /></Svg></IconButton>
          <IconButton aria-label="Learning"><Svg><circle cx="8" cy="8" r="8" fill="#3d3d3f" /><path d="M2 6.500L8 4l6 2.500L8 9z" fill="#fff" /><path d="M4 9q0 3 4 3t4-3l-4 1.500z" fill="#fff" /></Svg></IconButton>
          <Caret />
          <IconButton aria-label="Help"><Svg><circle cx="8" cy="8" r="8" fill="#3d3d3f" /><text x="8" y="12.500" textAnchor="middle" fontSize="13" fontWeight="bold" fill="#fff" fontFamily="Liberation Sans, sans-serif">?</text></Svg></IconButton>
        </Cluster>
      </TabBar>
      <Ribbon>
        {groups.map((g) => (
          <GroupBox key={g.name} $w={g.w}>
            <GroupBody>{g.parts.map((p, i) => <RibbonPart key={i} part={p} />)}</GroupBody>
            <GroupName>{g.name}<Caret /></GroupName>
          </GroupBox>
        ))}
        <GroupBox><GroupBody /><GroupName as="div" /></GroupBox>
      </Ribbon>
      <Main>
        <ModelTree />
        <Viewport>
          <SupportModel />
          <StyleState>Style State:Master Style(+)</StyleState>
          <ViewTools role="toolbar">
            {viewTools.map(([k, label]) => <ViewButton key={k} aria-label={label}>{I[k]}</ViewButton>)}
          </ViewTools>
        </Viewport>
        <Annotation>
          <svg width="213" height="44" viewBox="0 0 213 44" fill="none" stroke="#f00" strokeWidth="2">
            <path d="M1 2h92v39H1z" /><path d="M212 35L98 21" /><path d="M109 16L98 21l10 6" />
          </svg>
          approximately 38 kg (not include weld material and paint)
        </Annotation>
      </Main>
      <StatusBar>
        <StatusRow>
          <StatusToggle $on aria-label="Toggle tree">{I.tree}</StatusToggle>
          <StatusToggle aria-label="Toggle browser">{I.globe}</StatusToggle>
          <Rule $h={22} $gap={6} />
          <Messages>
            <Message>100 percent of model PLATE_11 has been processed.</Message>
            <Message>STEP file support_01_20180322_asm.stp has been created.</Message>
            <Message>50524 triangles have been written in output file support_asm.stl.</Message>
          </Messages>
          <Cluster $gap={0} $right={0}>
            <StatusSlot $w={30} />
            <StatusSlot $w={36} $pad={2}><Dot $s={6} $c="#c9cbcd" /><Dot $s={10} $c="#ff0" /><Dot $s={6} $c="#c9cbcd" /></StatusSlot>
            <StatusSlot $w={41} $pad={4}>{I.flag}</StatusSlot>
            <StatusSlot $w={46} $pad={2}><StatusButton aria-label="Find">{I.binos}</StatusButton></StatusSlot>
            <StatusSlot $w={46} $pad={2}><StatusButton aria-label="Selection">{I.cubeSel}</StatusButton></StatusSlot>
            <Picker>
              <FilterSelect aria-label="Selection filter" defaultValue="Smart"><option>Smart</option></FilterSelect>
              <PickerArrow><Caret /></PickerArrow>
            </Picker>
          </Cluster>
        </StatusRow>
        <Sill><SillMark /></Sill>
      </StatusBar>
    </Shell>
  );
}
